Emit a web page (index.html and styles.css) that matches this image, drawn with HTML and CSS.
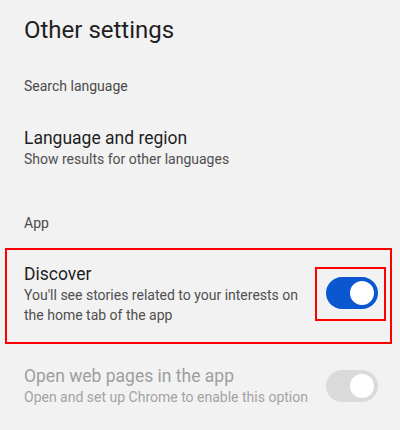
FILE: index.html
```html
<!DOCTYPE html>
<html lang="en">
<head>
  <meta charset="UTF-8" />
  <meta name="viewport" content="width=device-width, initial-scale=1.0"/>
  <title>Other settings</title>
  <link rel="stylesheet" href="styles.css">
</head>
<body>
  <div class="settings">
    <h1 class="page-title">Other settings</h1>

    <div class="section-label">Search language</div>
    <div class="row">
      <div class="row-text">
        <div class="row-title">Language and region</div>
        <div class="row-sub">Show results for other languages</div>
      </div>
    </div>

    <div class="section-label">App</div>
    <div class="row row-marked">
      <div class="row-text">
        <div class="row-title">Discover</div>
        <div class="row-sub">You'll see stories related to your interests on the home tab of the app</div>
      </div>
      <div class="switch-mark">
        <span class="switch on"><span class="knob"></span></span>
      </div>
    </div>

    <div class="row row-disabled">
      <div class="row-text">
        <div class="row-title">Open web pages in the app</div>
        <div class="row-sub">Open and set up Chrome to enable this option</div>
      </div>
      <span class="switch off"><span class="knob"></span></span>
    </div>
  </div>
</body>
</html>
```

FILE: styles.css
```css
* {
  margin: 0;
  padding: 0;
  box-sizing: border-box;
  font-family: Roboto, 'Liberation Sans', sans-serif;
}

body {
  background-color: #f2f2f2;
  color: #1f1f1f;
  width: 400px;
  height: 430px;
  overflow: hidden;
}

.settings {
  padding-top: 14px;
}

.page-title {
  font-size: 24px;
  font-weight: 400;
  line-height: 32px;
  padding: 0 24px;
  color: #1f1f1f;
}

.section-label {
  margin-top: 30px;
  padding: 0 24px;
  font-size: 14px;
  line-height: 20px;
  color: #4a4a4a;
}

.row {
  display: flex;
  align-items: center;
  gap: 16px;
  padding: 31px 22px 14px 24px;
}

.row-text {
  flex: 1;
}

.row-title {
  font-size: 17.5px;
  line-height: 22px;
  color: #1f1f1f;
}

.row-sub {
  font-size: 14px;
  line-height: 20px;
  color: #4f4f4f;
}

/* highlighted row */
.row-marked {
  margin: 15px 8px 0 5px;
  padding: 13px 4px 17px 17px;
  border: 2px solid #ff0000;
}

.switch-mark {
  border: 2px solid #ff0000;
  padding: 8px 6px 10px 9px;
  display: flex;
}

.row-disabled {
  padding-top: 21px;
}

.row-disabled .row-title {
  color: #9e9e9e;
}

.row-disabled .row-sub {
  color: #a3a3a3;
}

/* toggle switch */
.switch {
  width: 52px;
  height: 32px;
  border-radius: 16px;
  display: flex;
  align-items: center;
  justify-content: flex-end;
  padding: 0 4px;
  flex-shrink: 0;
}

.switch.on {
  background-color: #0b57d0;
}

.switch.off {
  background-color: #dadada;
}

.knob {
  width: 24px;
  height: 24px;
  border-radius: 50%;
  background-color: #fff;
}
```
